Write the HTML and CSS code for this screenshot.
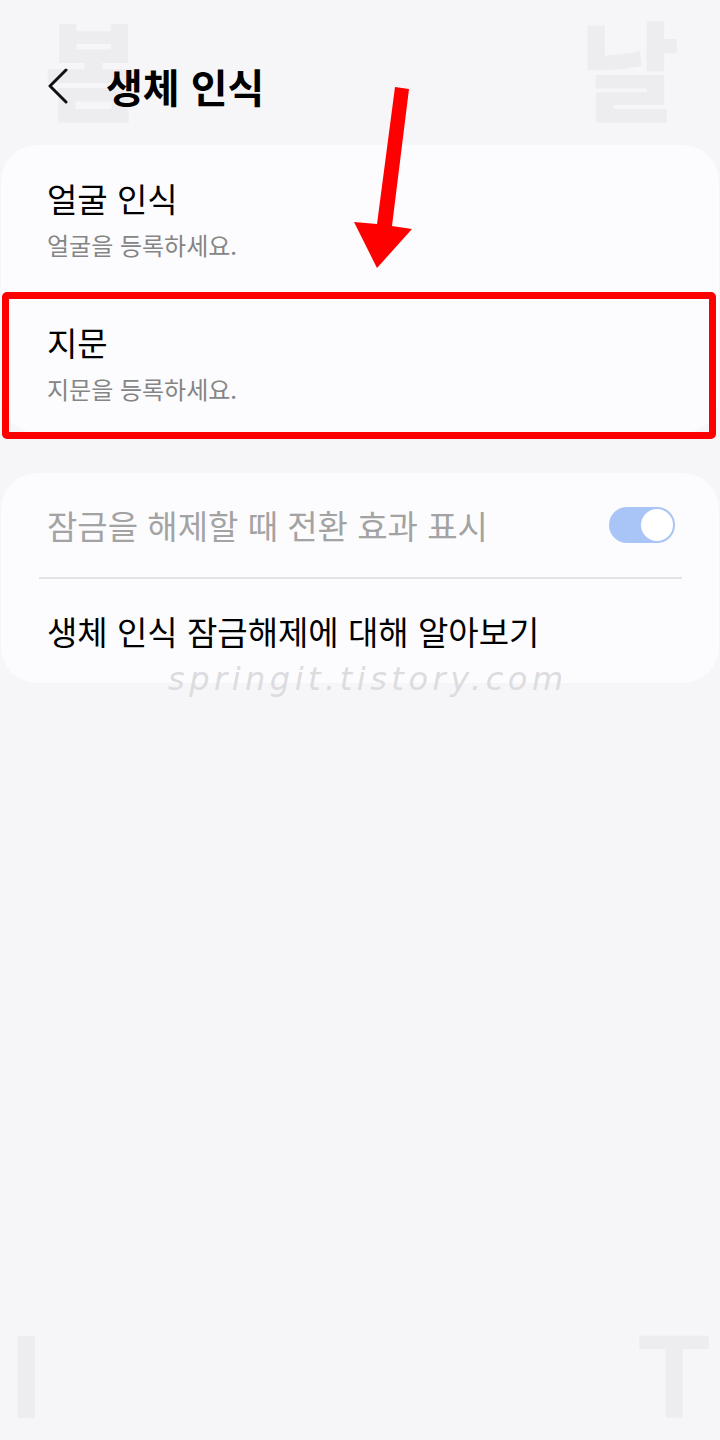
FILE: index.html
```html
<!DOCTYPE html>
<html lang="ko">
<head>
    <meta charset="UTF-8">
    <meta name="viewport" content="width=device-width, initial-scale=1.0">
    <title>생체 인식</title>
    <link rel="stylesheet" href="styles.css">
</head>
<body>
    <div class="screen">
        <!-- 배경 워터마크 -->
        <span class="wm wm-tl">봄</span>
        <span class="wm wm-tr">날</span>
        <span class="wm wm-bl">I</span>
        <span class="wm wm-br">T</span>

        <div class="header">
            <svg class="back" width="24" height="36" viewBox="0 0 24 36">
                <polyline points="20,2 4,18 20,34" fill="none" stroke="#111" stroke-width="3" stroke-linecap="round" stroke-linejoin="round"/>
            </svg>
            <h1>생체 인식</h1>
        </div>

        <div class="card">
            <div class="item">
                <div class="item-title">얼굴 인식</div>
                <div class="item-sub">얼굴을 등록하세요.</div>
            </div>
            <div class="item">
                <div class="item-title">지문</div>
                <div class="item-sub">지문을 등록하세요.</div>
            </div>
        </div>

        <div class="card">
            <div class="row">
                <span class="row-text disabled">잠금을 해제할 때 전환 효과 표시</span>
                <span class="switch"><span class="knob"></span></span>
            </div>
            <div class="divider"></div>
            <div class="row">
                <span class="row-text">생체 인식 잠금해제에 대해 알아보기</span>
            </div>
        </div>

        <div class="site-mark">springit.tistory.com</div>

        <!-- 강조 표시 -->
        <div class="highlight"></div>
        <svg class="arrow" width="720" height="300" viewBox="0 0 720 300">
            <polygon points="395,87 409,89 392,226 412,229 377,268 354,222 377,224" fill="#ff0000"/>
        </svg>
    </div>
</body>
</html>
```

FILE: styles.css
```css
body {
    margin: 0;
    background: #f6f6f8;
    font-family: "Noto Sans CJK KR", "Noto Sans", sans-serif;
    color: #000;
}
.screen {
    position: relative;
    width: 720px;
    height: 1440px;
    overflow: hidden;
}
.wm {
    position: absolute;
    color: #ededef;
    font-weight: 900;
    z-index: 0;
}
.wm-tl, .wm-tr { top: 0; font-size: 108px; line-height: 1.226; }
.wm-tl { left: 44px; }
.wm-tr { left: 580px; }
.wm-bl, .wm-br { top: 1318px; font-size: 118px; line-height: 1; font-family: "Liberation Sans", sans-serif; }
.wm-bl { left: 10px; }
.wm-br { left: 638px; }

.header {
    position: relative;
    display: flex;
    align-items: center;
    padding: 60px 0 0 46px;
    height: 52px;
    margin-bottom: 33px;
}
.back {
    margin-right: 36px;
}
h1 {
    margin: 0;
    font-size: 40px;
    font-weight: 700;
    line-height: 52px;
}
.card {
    position: relative;
    background: #fcfcfe;
    border-radius: 36px;
    margin: 0 1px 40px;
}
.item {
    padding: 32px 46px 28px;
}
.item-title {
    font-size: 33px;
    line-height: 42px;
}
.item-sub {
    font-size: 24px;
    line-height: 32px;
    margin-top: 10px;
    color: #858585;
}
.row {
    display: flex;
    align-items: center;
    justify-content: space-between;
    height: 104px;
    padding: 0 44px 0 46px;
}
.row-text {
    font-size: 33px;
}
.disabled {
    color: #a3a3a3;
}
.switch {
    display: flex;
    justify-content: flex-end;
    align-items: center;
    width: 66px;
    height: 36px;
    border-radius: 18px;
    background: #a9c4f6;
    box-sizing: border-box;
    padding: 2px;
}
.knob {
    width: 32px;
    height: 32px;
    border-radius: 50%;
    background: #fff;
}
.divider {
    height: 2px;
    background: #e3e3e6;
    margin: 0 37px 0 38px;
}
.site-mark {
    position: absolute;
    left: 168px;
    top: 660px;
    font-family: "DejaVu Sans", sans-serif;
    font-style: italic;
    font-weight: 300;
    font-size: 32px;
    letter-spacing: 4.5px;
    color: #dcdcdf;
}
.highlight {
    position: absolute;
    left: 2px;
    top: 292px;
    width: 714px;
    height: 147px;
    box-sizing: border-box;
    border: 7px solid #ff0000;
    border-radius: 5px;
}
.arrow {
    position: absolute;
    left: 0;
    top: 0;
}
```
